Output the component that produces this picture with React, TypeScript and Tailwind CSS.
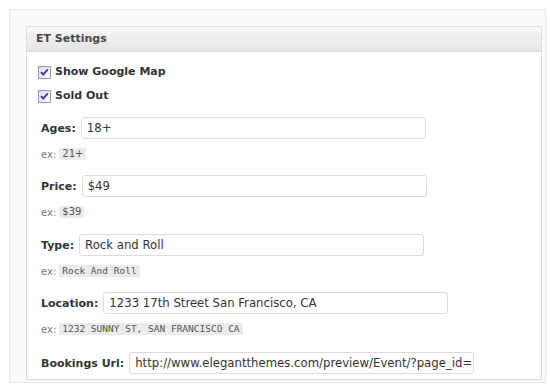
import React from "react";

const sans = { fontFamily: '"DejaVu Sans", Verdana, sans-serif' };
const cond = { fontFamily: '"DejaVu Sans Condensed", "DejaVu Sans", sans-serif', fontStretch: "condensed" as const };
const mono = { fontFamily: '"DejaVu Sans Mono", "Liberation Mono", monospace' };

function Check() {
  return (
    <svg width="13" height="13" viewBox="0 0 13 13" className="shrink-0">
      <defs>
        <linearGradient id="cbg" x1="0" y1="0" x2="1" y2="1">
          <stop offset="0" stopColor="#dcdce8" />
          <stop offset="1" stopColor="#ffffff" />
        </linearGradient>
      </defs>
      <rect x="0.5" y="0.5" width="12" height="12" fill="url(#cbg)" stroke="#8c9cc0" />
      <path d="M3 6.2 L5.2 8.6 L9.8 3.4" fill="none" stroke="#3a3aa8" strokeWidth="1.8" />
    </svg>
  );
}

function Field({ label, value, ex, code, extra }: { label: string; value: string; ex?: string; code?: boolean; extra?: string }) {
  return (
    <div className={"ml-[3px] " + (extra || "")}>
      <div className="flex items-center h-[22px]">
        <span className="text-[11px] font-bold text-[#333] pt-[3px]" style={sans}>{label}</span>
        <div className="ml-[5px] w-[345px] h-[22px] border border-[#dcdcdc] rounded-[3px] bg-white flex items-center pl-[5px] overflow-hidden whitespace-nowrap">
          <span className="text-[13px] text-[#333]" style={cond}>{value}</span>
        </div>
      </div>
      {ex && (
        <div className="mt-[9px] h-[12px] flex items-center">
          <span className="text-[10px] text-[#777]" style={sans}>ex:</span>
          <span
            className={"ml-[3px] bg-[#ebebeb] px-[3px] h-[12px] leading-[12px] text-[#555] " + (code ? "text-[9.5px]" : "text-[10px]")}
            style={code ? mono : sans}
          >
            {ex}
          </span>
        </div>
      )}
    </div>
  );
}

export default function App() {
  return (
    <div className="w-[550px] h-[390px] bg-white overflow-hidden pt-[9px] pl-[9px]">
      <div className="w-[537px] h-[374px] border border-[#e8e8e8] bg-[#fafafa] pt-[16px] pl-[16px]">
        <div className="w-[516px] h-[354px] border border-[#dcdcdc] bg-white overflow-hidden">
          <div className="h-[25px] border-b border-[#dcdcdc] bg-gradient-to-b from-[#f8f8f8] to-[#e4e4e4] flex items-center pl-[9px]">
            <span className="text-[11px] font-bold text-[#464646]" style={sans}>ET Settings</span>
          </div>
          <div className="pt-[8px] pl-[11px]">
            <div className="h-[24px] flex items-center">
              <Check />
              <span className="ml-[4px] text-[11px] font-bold text-[#333]" style={sans}>Show Google Map</span>
            </div>
            <div className="h-[24px] flex items-center">
              <Check />
              <span className="ml-[4px] text-[11px] font-bold text-[#333]" style={sans}>Sold Out</span>
            </div>
            <div className="mt-[9px] flex flex-col gap-[15px]">
              <Field label="Ages:" value="18+" ex="21+" />
              <Field label="Price:" value="$49" ex="$39" />
              <Field label="Type:" value="Rock and Roll" ex="Rock And Roll" code extra="mt-[1px]" />
              <Field label="Location:" value="1233 17th Street San Francisco, CA" ex="1232 SUNNY ST, SAN FRANCISCO CA" code />
              <Field label="Bookings Url:" value="http://www.elegantthemes.com/preview/Event/?page_id=123" extra="mt-[2px]" />
            </div>
          </div>
        </div>
      </div>
    </div>
  );
}
